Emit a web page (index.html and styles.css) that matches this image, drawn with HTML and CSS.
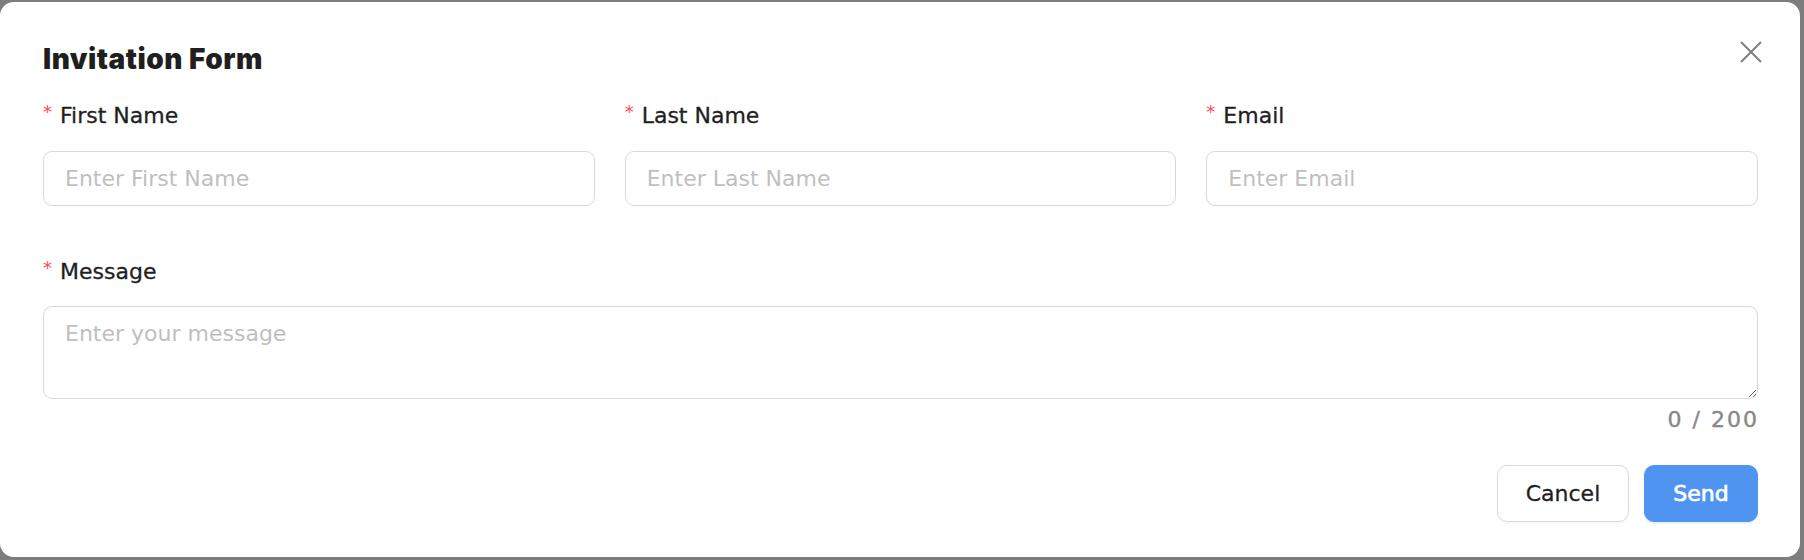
FILE: index.html
```html
<!DOCTYPE html>
<html lang="en">
<head>
<meta charset="utf-8">
<title>Invitation Form</title>
<link rel="stylesheet" href="styles.css">
</head>
<body>
<div class="modal">
  <button class="close" type="button" aria-label="Close">
    <svg width="22" height="22" viewBox="0 0 22 22"><path d="M1 1L21 21M21 1L1 21" stroke="#7f7f7f" stroke-width="2" fill="none"/></svg>
  </button>
  <h1 class="title">Invitation Form</h1>
  <div class="row">
    <div class="field">
      <label class="label"><span class="req">*</span>First Name</label>
      <input class="input" type="text" placeholder="Enter First Name">
    </div>
    <div class="field">
      <label class="label"><span class="req">*</span>Last Name</label>
      <input class="input" type="text" placeholder="Enter Last Name">
    </div>
    <div class="field">
      <label class="label"><span class="req">*</span>Email</label>
      <input class="input" type="text" placeholder="Enter Email">
    </div>
  </div>
  <div class="field message">
    <label class="label"><span class="req">*</span>Message</label>
    <textarea class="textarea" placeholder="Enter your message"></textarea>
    <div class="count">0 / 200</div>
  </div>
  <div class="footer">
    <button class="btn btn-default" type="button">Cancel</button>
    <button class="btn btn-primary" type="button">Send</button>
  </div>
</div>
</body>
</html>
```
FILE: styles.css
```css
* { box-sizing: border-box; }
html, body { margin: 0; padding: 0; }
body {
  background: #7d7d7d;
  width: 1804px;
  height: 560px;
  overflow: hidden;
  font-family: "DejaVu Sans", sans-serif;
  color: #1f1f1f;
}
.modal {
  position: relative;
  margin: 2px 4px 0 0;
  height: 555px;
  background: #fff;
  border-radius: 14px;
  padding: 39px 42px 35px 43px;
}
.close {
  position: absolute;
  top: 39px;
  right: 38px;
  width: 22px;
  height: 22px;
  padding: 0;
  border: 0;
  background: none;
  display: flex;
}
.title {
  margin: 0;
  font-family: "Inter", sans-serif;
  font-weight: 900;
  font-size: 28px;
  line-height: 36px;
  letter-spacing: 0.5px;
  color: #1f1f1f;
}
.row {
  display: grid;
  grid-template-columns: repeat(3, 1fr);
  column-gap: 30px;
  margin-top: 22px;
}
.field { display: flex; flex-direction: column; }
.label {
  font-size: 22px;
  line-height: 33px;
  margin-bottom: 19px;
  color: #1f1f1f;
  display: flex;
  align-items: flex-start;
  -webkit-text-stroke: 0.3px #1f1f1f;
}
.req {
  color: #ff4d4f;
  font-size: 18px;
  line-height: 26px;
  margin-right: 8px;
  -webkit-text-stroke: 0;
}
.input {
  height: 55px;
  border: 1px solid #d9d9d9;
  border-radius: 9px;
  padding: 0 21px;
  font-family: "DejaVu Sans", sans-serif;
  font-size: 22px;
  color: #1f1f1f;
  outline: none;
  background: #fff;
}
.input::placeholder, .textarea::placeholder { color: #bfbfbf; }
.message { margin-top: 49px; }
.message .label { margin-bottom: 18px; }
.textarea {
  height: 93px;
  border: 1px solid #d9d9d9;
  border-radius: 9px;
  padding: 10px 21px;
  font-family: "DejaVu Sans", sans-serif;
  font-size: 22px;
  line-height: 33px;
  resize: vertical;
  outline: none;
}
.count {
  margin-top: 4px;
  text-align: right;
  font-size: 22px;
  line-height: 33px;
  letter-spacing: 2px;
  color: #888888;
  margin-right: -1px;
  -webkit-text-stroke: 0.4px #888888;
}
.footer {
  display: flex;
  justify-content: flex-end;
  gap: 15px;
  margin-top: 29px;
}
.btn {
  height: 57px;
  border-radius: 10px;
  font-family: "DejaVu Sans", sans-serif;
  font-size: 22px;
  padding: 0;
  cursor: pointer;
}
.btn-default {
  width: 132px;
  background: #fff;
  border: 1px solid #d9d9d9;
  color: #1f1f1f;
  -webkit-text-stroke: 0.3px #1f1f1f;
  box-shadow: 0 2px 0 rgba(0, 0, 0, 0.02);
}
.btn-primary {
  width: 114px;
  background: #4f94f1;
  border: 1px solid #4f94f1;
  color: #fff;
  -webkit-text-stroke: 0.7px #fff;
  box-shadow: 0 2px 0 rgba(5, 145, 255, 0.1);
}
```
